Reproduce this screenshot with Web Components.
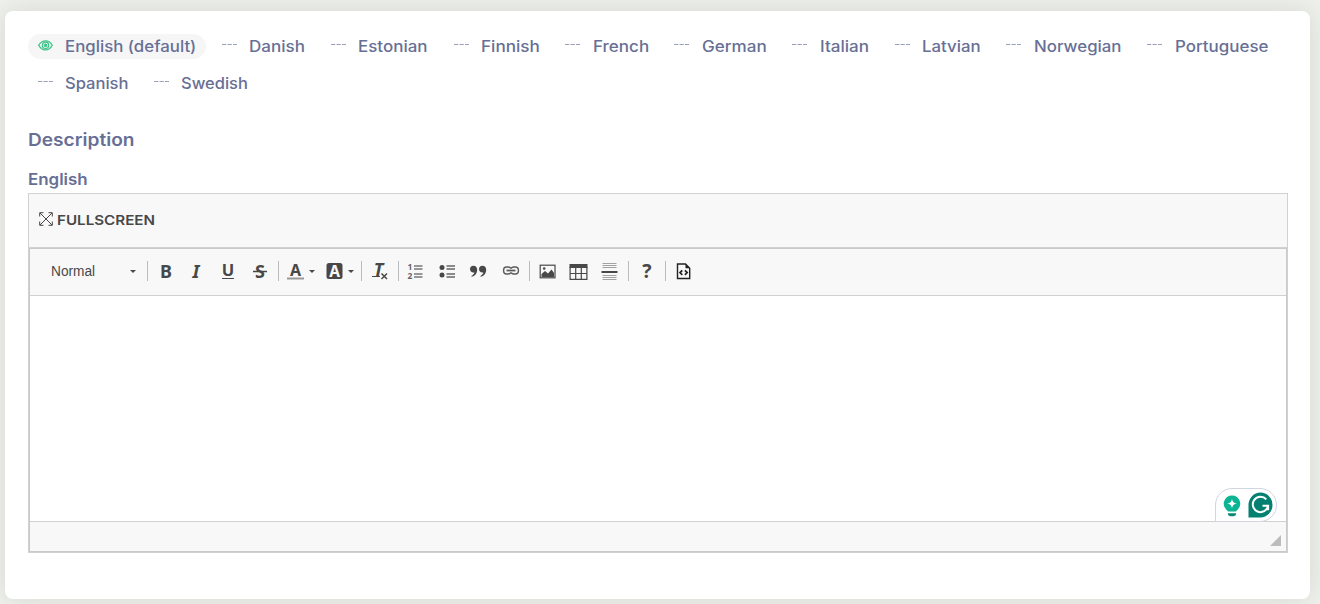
<!DOCTYPE html>
<html lang="en">
<head>
<meta charset="utf-8">
<title>Description</title>
<style>
    html, body { margin: 0; height: 100%; }
    body {
        box-sizing: border-box;
        height: 604px;
        overflow: hidden;
        padding: 11px 10px 5px 5px;
        background: #f0f1ed;
        color: #686f95;
        font: 500 16px Inter, sans-serif;
    }
</style>
</head>
<body>
<panel-card>
    <language-tabs></language-tabs>
    <section-title>Description</section-title>
    <field-label>English</field-label>
    <text-editor></text-editor>
</panel-card>

<script>
class FitText extends HTMLElement {
    connectedCallback() {
        const shadow = this.attachShadow({ mode: 'open' });
        const width = Number(this.getAttribute('width'));
        shadow.innerHTML = `
            <style>
                :host { display: inline-block; width: ${width}px; white-space: nowrap; }
                span { display: inline-block; transform-origin: 0 50%; }
            </style>
            <span><slot></slot></span>
        `;
        const span = shadow.querySelector('span');
        span.style.transform = `scaleX(${width / span.offsetWidth})`;
    }
}
customElements.define('fit-text', FitText);

class PanelCard extends HTMLElement {
    constructor() {
        super();
        this.attachShadow({ mode: 'open' }).innerHTML = `
            <style>
                :host {
                    display: flex;
                    flex-direction: column;
                    box-sizing: border-box;
                    height: 587.5px;
                    padding: 23px 22px 0 23px;
                    background: #fff;
                    border-radius: 8px;
                    box-shadow: 0 0 26px rgba(70, 85, 55, 0.16);
                }
            </style>
            <slot></slot>
        `;
    }
}
customElements.define('panel-card', PanelCard);

class LanguageTab extends HTMLElement {
    connectedCallback() {
        const active = this.hasAttribute('active');
        const icon = active
            ? `<svg width="15" height="11" viewBox="0 0 15 11" fill="none" stroke="#3cc487">
                <path d="M.7 5.300C2.300 2.400 4.700.8 7.500.8s5.200 1.600 6.800 4.500C12.700 8.200 10.300 9.900 7.500 9.900S2.300 8.200.7 5.300z" stroke-width="1.300"/>
                <circle cx="7.500" cy="5.300" r="3.200" stroke-width="1.200"/>
                <circle cx="7.500" cy="5.300" r="1.400" fill="#3cc487"/>
               </svg>`
            : `<svg width="15" height="11" viewBox="0 0 15 11"><path d="M0 4.500h4.300M5.500 4.500h4.300M11 4.500h4" stroke="#9ba0ba" stroke-width="1"/></svg>`;
        this.attachShadow({ mode: 'open' }).innerHTML = `
            <style>
                :host {
                    display: flex;
                    align-items: center;
                    height: 25px;
                    padding: 0 10px 0 9.500px;
                    border-radius: 13px;
                    background: ${active ? '#f6f6f6' : 'transparent'};
                }
                svg { flex: none; margin: 0 12.500px 3px 0; }
            </style>
            ${icon}<fit-text width="${this.getAttribute('width')}"><slot></slot></fit-text>
        `;
    }
}
customElements.define('language-tab', LanguageTab);

const languages = [
    ['English (default)', 131.3], ['Danish', 56], ['Estonian', 70], ['Finnish', 58.5],
    ['French', 56], ['German', 65], ['Italian', 49.5], ['Latvian', 58.5],
    ['Norwegian', 88], ['Portuguese', 94], ['Spanish', 63], ['Swedish', 67]
];

class LanguageTabs extends HTMLElement {
    constructor() {
        super();
        const tabs = languages.map(([name, width], i) =>
            `<language-tab width="${width}" ${i === 0 ? 'active' : ''}>${name}</language-tab>`).join('');
        this.attachShadow({ mode: 'open' }).innerHTML = `
            <style>
                :host {
                    display: flex;
                    flex-wrap: wrap;
                    gap: 12px 6px;
                    font-size: 15.500px;
                }
            </style>
            ${tabs}
        `;
    }
}
customElements.define('language-tabs', LanguageTabs);

class SectionTitle extends HTMLElement {
    constructor() {
        super();
        this.attachShadow({ mode: 'open' }).innerHTML = `
            <style>
                :host { display: block; margin-top: 32px; font-size: 17.500px; font-weight: 600; line-height: 24px; }
            </style>
            <fit-text width="107"><slot></slot></fit-text>
        `;
    }
}
customElements.define('section-title', SectionTitle);

class FieldLabel extends HTMLElement {
    constructor() {
        super();
        this.attachShadow({ mode: 'open' }).innerHTML = `
            <style>
                :host { display: block; margin-top: 16px; height: 25px; font-size: 15.500px; font-weight: 600; line-height: 24px; }
            </style>
            <fit-text width="60"><slot></slot></fit-text>
        `;
    }
}
customElements.define('field-label', FieldLabel);

// 20x20 toolbar icons
const icons = {
    bold: '<text x="10" y="16.500" font-size="18">B</text>',
    italic: '<text x="9" y="16.500" font-size="18" font-style="italic">I</text>',
    underline: '<text x="10" y="15" font-size="16.500">U</text><path d="M4 17.500h12" stroke="#484848"/>',
    strike: '<text x="10" y="16.500" font-size="18">S</text><path d="M3 10.500h14" stroke="#484848" stroke-width="1.500"/>',
    color: '<text x="9.500" y="14.500" font-size="16">A</text><path d="M1 17.500h17" stroke="#999" stroke-width="2"/>',
    background: '<rect x="1.500" y="2" width="16" height="16" rx="2.500"/><text x="9.500" y="15.500" font-size="15.500" fill="#f8f8f8">A</text>',
    clear: '<text x="8.500" y="15" font-size="18" font-style="italic">T</text><path d="M2 15.500h8" stroke="#484848"/><path d="M11.500 12.500l5.500 5.500m0-5.500l-5.500 5.500" stroke="#484848" stroke-width="1.500"/>',
    numbered: '<g transform="translate(-1.500 0)"><text x="4.500" y="9" font-size="8.500" fill="#666">1</text><text x="4.500" y="18" font-size="8.500" fill="#666">2</text><path d="M8.500 5.500h8.500M8.500 8.500h8.500M8.500 13.500h8.500M8.500 16.500h8.500" transform="translate(0 -.5)" stroke="#777" stroke-width="1.300"/></g>',
    bulleted: '<g transform="translate(-.5 0)"><circle cx="4.500" cy="6.500" r="2.500"/><circle cx="4.500" cy="14" r="2.500"/><path d="M9 5.500h8.500M9 8.500h8.500M9 13.500h8.500M9 16.500h8.500" transform="translate(0 -.5)" stroke="#666" stroke-width="1.300"/></g>',
    quote: '<path transform="translate(-1 0)" d="M5.300 4.700C8 4.700 9.400 6.500 9.200 9.200 9 12.500 7 15 3.700 15.800l-.4-.9C5.200 14 6.200 12.800 6.300 11.500 3.800 12 2 10.400 2 8.100 2 6.200 3.400 4.700 5.300 4.700zM14.300 4.700C17 4.700 18.400 6.500 18.200 9.200 18 12.500 16 15 12.700 15.800l-.4-.9c1.900-.9 2.900-2.100 3-3.400C12.800 12 11 10.400 11 8.100c0-1.900 1.400-3.400 3.300-3.400z"/>',
    link: '<g fill="none" stroke="#5c5c5c" stroke-width="1.400"><rect x="2.600" y="6" width="7.500" height="7" rx="3"/><rect x="9.900" y="6" width="7.500" height="7" rx="3"/></g><path d="M5.500 9.500h9" stroke="#f8f8f8" stroke-width="3.600"/><path d="M5.500 9.500h9" stroke="#5c5c5c" stroke-width="1.800"/>',
    image: '<rect x="2.200" y="4.200" width="14.800" height="12.600" fill="none" stroke="#484848" stroke-width="1.200"/><path d="M3.500 16v-3l3.500-3 3 2.500L13.500 8.500l2.500 3.500v4z"/><circle cx="6.200" cy="7.500" r="1.300"/>',
    table: '<path d="M.5 3h18v4H.5z"/><path d="M1.100 6v12.400h16.800V6M1.100 12.500h16.800M6.700 6v12.400M12.300 6v12.400" fill="none" stroke="#484848" stroke-width="1.200"/>',
    rule: '<path d="M2.500 2.500h14M2.500 4.500h14M2.500 6.500h14M2.500 14.500h14M2.500 16.500h14M2.500 18.500h14" stroke="#a2a2a2"/><path d="M1.500 11h16" stroke="#484848" stroke-width="2"/>',
    help: '<text x="10" y="17" font-size="19.500">?</text>',
    source: '<path d="M3.500 3h8l4.200 4.300v10.200H3.500z" fill="none" stroke="#222" stroke-width="1.400"/><path d="M11.500 3v4.300h4.200z" fill="#222"/><path d="M8.300 9.300l-2.300 2.300 2.300 2.300M10.900 9.300l2.300 2.300-2.300 2.300" fill="none" stroke="#222" stroke-width="1.700"/>'
};

class ToolButton extends HTMLElement {
    connectedCallback() {
        const menu = this.hasAttribute('menu');
        this.attachShadow({ mode: 'open' }).innerHTML = `
            <style>
                :host {
                    display: flex;
                    align-items: center;
                    justify-content: center;
                    width: ${menu ? 38.7 : 31.3}px;
                    height: 22px;
                }
                svg { flex: none; overflow: visible; fill: #484848; font-family: "Noto Sans", sans-serif; font-weight: 700; text-anchor: middle; }
                i { margin-left: 3px; border: 3px solid transparent; border-top-color: #484848; border-bottom: 0; }
            </style>
            <svg width="20" height="20" viewBox="0 0 20 20">${icons[this.getAttribute('icon')]}</svg>
            ${menu ? '<i></i>' : ''}
        `;
    }
}
customElements.define('tool-button', ToolButton);

class ToolGroup extends HTMLElement {
    constructor() {
        super();
        this.attachShadow({ mode: 'open' }).innerHTML = `
            <style>
                :host { display: flex; align-items: center; height: 20px; padding: 0 2.500px 0 2.200px; border-left: 1px solid #bcbcbc; }
            </style>
            <slot></slot>
        `;
    }
}
customElements.define('tool-group', ToolGroup);

class FormatSelect extends HTMLElement {
    constructor() {
        super();
        this.attachShadow({ mode: 'open' }).innerHTML = `
            <style>
                :host {
                    display: flex;
                    align-items: center;
                    justify-content: space-between;
                    box-sizing: border-box;
                    width: 117px;
                    padding: 0 11px 0 21px;
                    color: #484848;
                    font: 14px "Liberation Sans", Arial, sans-serif;
                }
                i { border: 3px solid transparent; border-top-color: #484848; border-bottom: 0; }
            </style>
            <fit-text width="44"><slot></slot></fit-text><i></i>
        `;
    }
}
customElements.define('format-select', FormatSelect);

class WritingBadge extends HTMLElement {
    constructor() {
        super();
        this.attachShadow({ mode: 'open' }).innerHTML = `
            <style>
                :host {
                    display: flex;
                    align-items: center;
                    box-sizing: border-box;
                    width: 62px;
                    height: 34px;
                    padding-left: 7.500px;
                    gap: 7px;
                    background: #fff;
                    border: 1px solid #d2d4e2;
                    border-radius: 17px 17px 17px 0;
                }
            </style>
            <svg width="18" height="24" viewBox="0 0 18 24">
                <path d="M9 2.500a8.200 8.200 0 0 0-5 14.700l1.200 1.300h7.600l1.200-1.300A8.200 8.200 0 0 0 9 2.500z" fill="#0bb594"/>
                <path d="M4.800 20.200h8.400c-.1 1.700-1.300 3-3 3H7.800c-1.700 0-2.900-1.300-3-3z" fill="#078775"/>
                <path d="M9 5.900c.7 3 1.700 4 4.700 4.700-3 .7-4 1.700-4.700 4.700-.7-3-1.700-4-4.700-4.700 3-.7 4-1.700 4.700-4.700z" fill="#fff"/>
            </svg>
            <svg width="25" height="26" viewBox="0 0 25 26">
                <path d="M.5 25.500V13a12 12.500 0 1 1 12 12.500z" fill="#058070"/>
                <path d="M18.300 7.300A7.700 7.700 0 1 0 20.100 13.800h-5.600M20.100 13.500v4.800" fill="none" stroke="#fff" stroke-width="2"/>
            </svg>
        `;
    }
}
customElements.define('writing-badge', WritingBadge);

class TextEditor extends HTMLElement {
    constructor() {
        super();
        const group = (...names) => `<tool-group>${names.map(n => `<tool-button icon="${n}"></tool-button>`).join('')}</tool-group>`;
        this.attachShadow({ mode: 'open' }).innerHTML = `
            <style>
                :host { display: block; box-sizing: border-box; width: 1260px; height: 360px; border: 1px solid #d1d1d1; }
                .fullscreen {
                    display: flex;
                    align-items: center;
                    gap: 4px;
                    box-sizing: border-box;
                    height: 54px;
                    padding: 0 0 2px 10px;
                    background: #f8f8f8;
                    border-bottom: 1px solid #d1d1d1;
                    color: #484848;
                    font-size: 13.700px;
                    font-weight: 600;
                }
                .fullscreen svg { margin-bottom: 2px; }
                .editor { position: relative; display: flex; flex-direction: column; box-sizing: border-box; height: 304px; border: 1px solid #c9c9c9; }
                .toolbar { display: flex; align-items: center; box-sizing: border-box; height: 47px; padding-bottom: 2px; background: #f8f8f8; border-bottom: 1px solid #d1d1d1; }
                .content { flex: 1; }
                .status {
                    display: flex;
                    justify-content: flex-end;
                    align-items: flex-end;
                    box-sizing: border-box;
                    height: 30px;
                    padding: 0 5px 5px 0;
                    background: #f8f8f8;
                    border-top: 1px solid #d1d1d1;
                }
                writing-badge { position: absolute; right: 9.500px; bottom: 29px; }
            </style>
            <div class="fullscreen">
                <svg width="14" height="14" viewBox="0 0 14 14" fill="none" stroke="#484848"><path d="M1 1l12 12M13 1L1 13M.7 4.500V.7h3.800M9.500.7h3.800v3.800M13.300 9.500v3.800H9.500M4.500 13.300H.7V9.500"/></svg>
                <fit-text width="97.500">FULLSCREEN</fit-text>
            </div>
            <div class="editor">
                <div class="toolbar">
                    <format-select>Normal</format-select>
                    ${group('bold', 'italic', 'underline', 'strike')}
                    <tool-group><tool-button icon="color" menu></tool-button><tool-button icon="background" menu></tool-button></tool-group>
                    ${group('clear')}
                    ${group('numbered', 'bulleted', 'quote', 'link')}
                    ${group('image', 'table', 'rule')}
                    ${group('help')}
                    ${group('source')}
                </div>
                <div class="content"></div>
                <div class="status"><svg width="11" height="11"><path d="M11 0v11H0z" fill="#bcbcbc"/></svg></div>
                <writing-badge></writing-badge>
            </div>
        `;
    }
}
customElements.define('text-editor', TextEditor);
</script>
</body>
</html>
